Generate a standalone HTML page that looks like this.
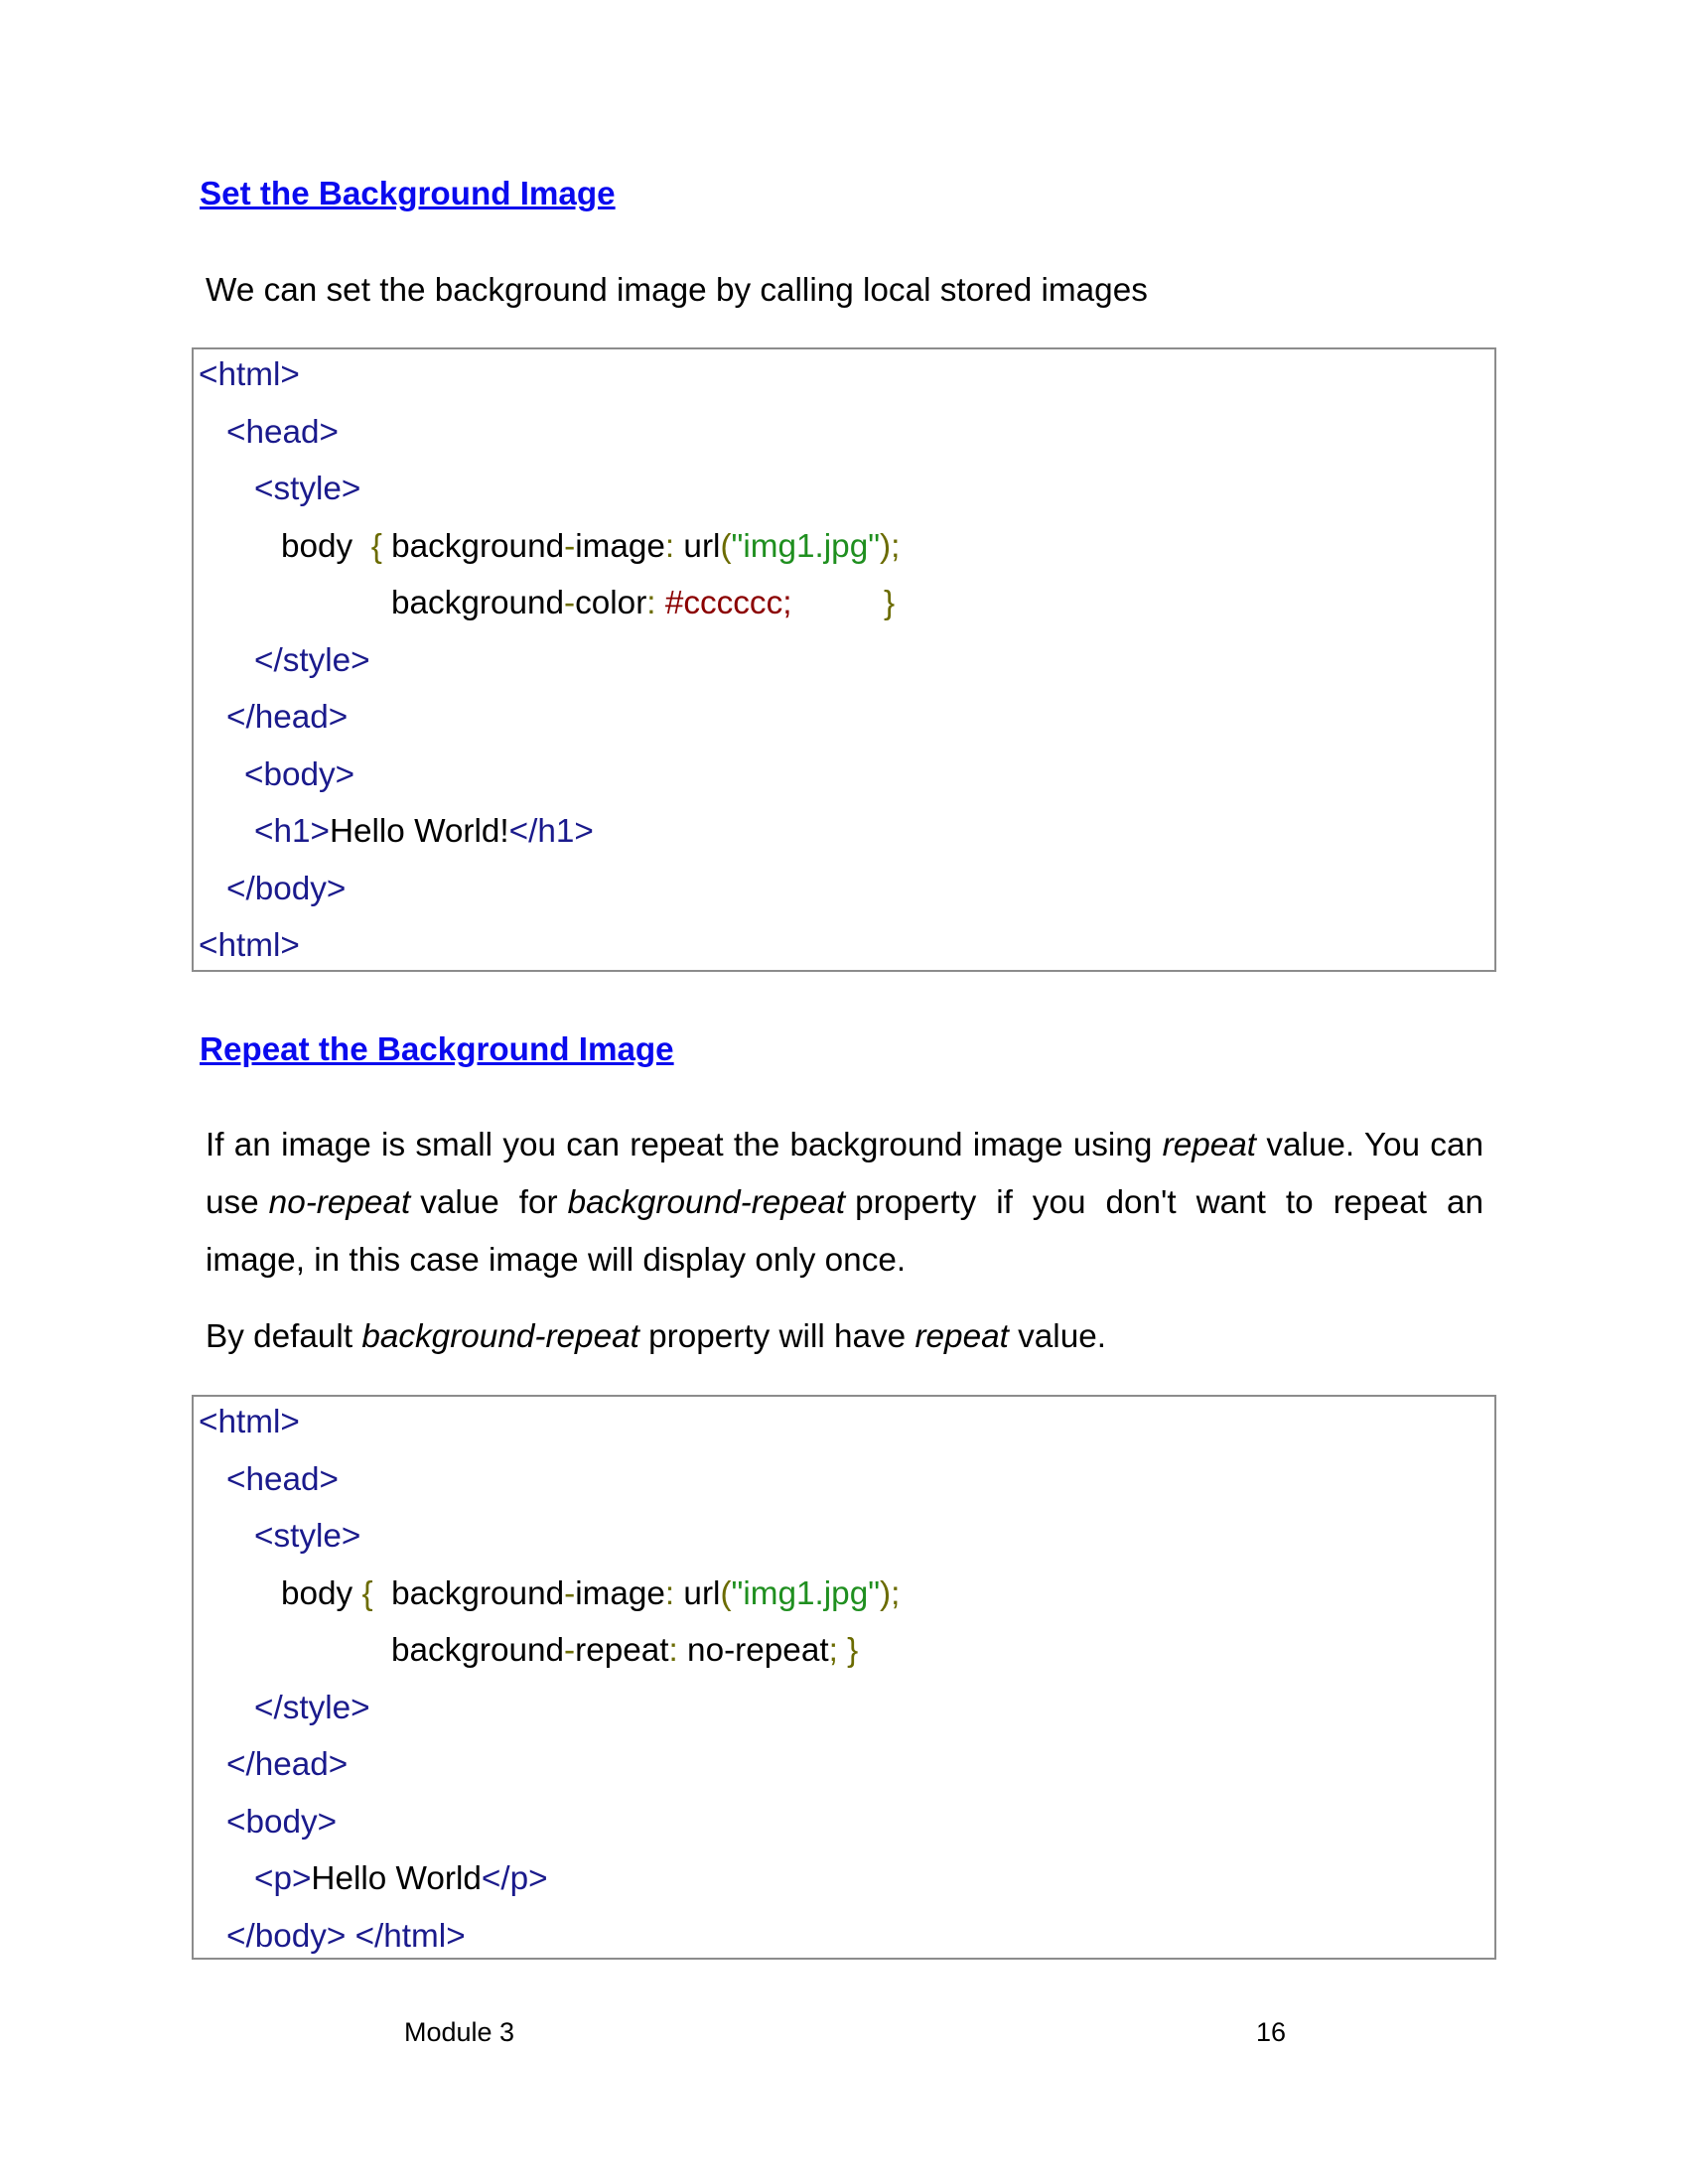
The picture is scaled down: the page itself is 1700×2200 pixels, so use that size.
<!DOCTYPE html>
<html><head><meta charset="utf-8"><style>
body{margin:0;width:1700px;height:2200px;background:#fff;position:relative;font-family:"Liberation Sans",Arial,sans-serif;color:#000;overflow:hidden}
.a{position:absolute;white-space:pre;line-height:40px;height:40px}
h2{position:absolute;margin:0;font-size:33.2px;font-weight:bold;color:#0a0aee;text-decoration:underline;line-height:40px;white-space:pre}
.p{font-size:33.3px}
.c{font-size:33.3px}
.t{color:#1a1a8c}
.o{color:#6b6b00}
.g{color:#1f8f1f}
.r{color:#8b0000}
.box{position:absolute;border:2px solid #8c8c8c;box-sizing:border-box}
.j{text-align:justify;text-align-last:justify;width:1287px}
.f{font-size:27px;font-family:"Liberation Sans",sans-serif}
</style></head><body>
<h2 style="left:201px;top:176px">Set the Background Image</h2>
<div class="a p" style="left:207px;top:273px">We can set the background image by calling local stored images</div>
<div class="box" style="left:193px;top:350px;width:1314px;height:629px"></div>
<div class="a c t" style="left:200px;top:358px">&lt;html&gt;</div>
<div class="a c t" style="left:228px;top:416px">&lt;head&gt;</div>
<div class="a c t" style="left:256px;top:473px">&lt;style&gt;</div>
<div class="a c" style="left:283px;top:531px">body  <span class="o">{</span> background<span class="o">-</span>image<span class="o">:</span> url<span class="o">(</span><span class="g">"img1.jpg"</span><span class="o">);</span></div>
<div class="a c" style="left:394px;top:588px">background<span class="o">-</span>color<span class="o">:</span> <span class="r">#cccccc;</span>          <span class="o">}</span></div>
<div class="a c t" style="left:256px;top:646px">&lt;/style&gt;</div>
<div class="a c t" style="left:228px;top:703px">&lt;/head&gt;</div>
<div class="a c t" style="left:246px;top:761px">&lt;body&gt;</div>
<div class="a c" style="left:256px;top:818px"><span class="t">&lt;h1&gt;</span>Hello World!<span class="t">&lt;/h1&gt;</span></div>
<div class="a c t" style="left:228px;top:876px">&lt;/body&gt;</div>
<div class="a c t" style="left:200px;top:933px">&lt;html&gt;</div>

<h2 style="left:201px;top:1038px">Repeat the Background Image</h2>
<div class="a p j" style="left:207px;top:1134px">If an image is small you can repeat the background image using <i>repeat</i> value. You can</div>
<div class="a p j" style="left:207px;top:1192px">use <i>no-repeat</i> value  for <i>background-repeat</i> property  if  you  don't  want  to  repeat  an</div>
<div class="a p" style="left:207px;top:1250px">image, in this case image will display only once.</div>
<div class="a p" style="left:207px;top:1327px">By default <i>background-repeat</i> property will have <i>repeat</i> value.</div>

<div class="box" style="left:193px;top:1405px;width:1314px;height:569px"></div>
<div class="a c t" style="left:200px;top:1413px">&lt;html&gt;</div>
<div class="a c t" style="left:228px;top:1471px">&lt;head&gt;</div>
<div class="a c t" style="left:256px;top:1528px">&lt;style&gt;</div>
<div class="a c" style="left:283px;top:1586px">body <span class="o">{</span>  background<span class="o">-</span>image<span class="o">:</span> url<span class="o">(</span><span class="g">"img1.jpg"</span><span class="o">);</span></div>
<div class="a c" style="left:394px;top:1643px">background<span class="o">-</span>repeat<span class="o">:</span> no-repeat<span class="o">; }</span></div>
<div class="a c t" style="left:256px;top:1701px">&lt;/style&gt;</div>
<div class="a c t" style="left:228px;top:1758px">&lt;/head&gt;</div>
<div class="a c t" style="left:228px;top:1816px">&lt;body&gt;</div>
<div class="a c" style="left:256px;top:1873px"><span class="t">&lt;p&gt;</span>Hello World<span class="t">&lt;/p&gt;</span></div>
<div class="a c t" style="left:228px;top:1931px">&lt;/body&gt; &lt;/html&gt;</div>

<div class="a f" style="left:407px;top:2027px">Module 3</div>
<div class="a f" style="left:1265px;top:2027px">16</div>
</body></html>
